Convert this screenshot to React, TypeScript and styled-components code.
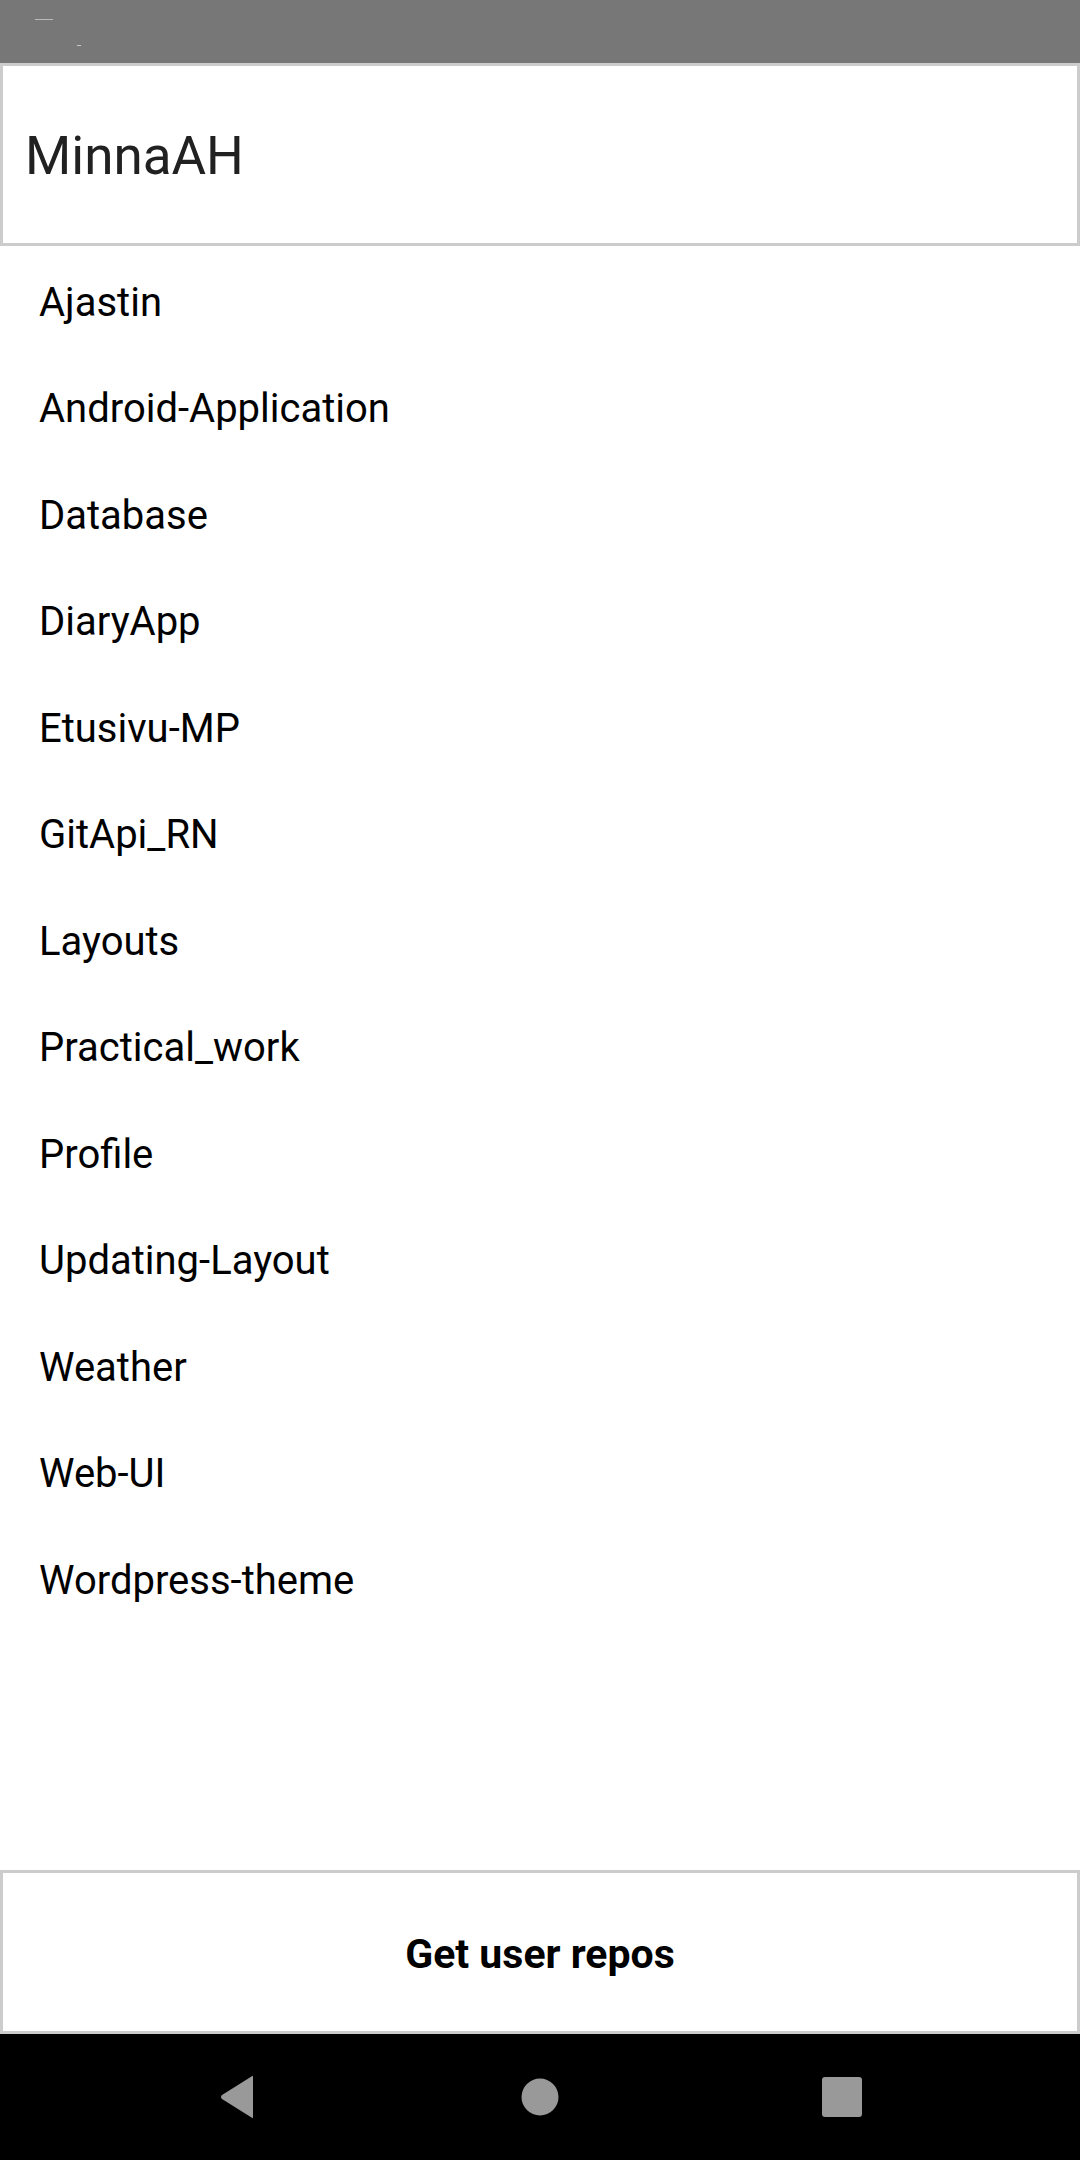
import React from "react";
import styled, { createGlobalStyle } from "styled-components";

const Global = createGlobalStyle`
  html, body { margin: 0; padding: 0; background: #ffffff; }
  body { font-family: Roboto, "Noto Sans", "Liberation Sans", sans-serif; }
  * { box-sizing: border-box; }
`;

const Screen = styled.div`
  width: 1080px;
  height: 2160px;
  display: flex;
  flex-direction: column;
  background: #ffffff;
  overflow: hidden;
`;

const StatusBar = styled.div`
  height: 63px;
  flex: none;
  background: #777777;
  display: flex;
  align-items: flex-start;
  padding: 18px 0 0 35px;
  gap: 24px;
`;

const StatusMark = styled.div<{ $w: number; $top: number; $o: number }>`
  width: ${(p) => p.$w}px;
  height: 1px;
  margin-top: ${(p) => p.$top}px;
  background: rgba(255, 255, 255, ${(p) => p.$o});
`;

const Input = styled.div`
  height: 183px;
  flex: none;
  border: 3px solid #cccccc;
  display: flex;
  align-items: center;
  padding-left: 22px;
  padding-top: 2px;
  font-size: 53px;
  color: #212121;
`;

const List = styled.div`
  flex: 1;
  display: flex;
  flex-direction: column;
  padding-top: 3px;
`;

const Row = styled.div`
  height: 106.5px;
  flex: none;
  display: flex;
  align-items: center;
  padding-left: 39px;
  font-size: 40px;
  color: #000000;
`;

const Button = styled.div`
  height: 164px;
  flex: none;
  border: 3px solid #cccccc;
  display: flex;
  align-items: center;
  justify-content: center;
  padding-top: 4px;
  font-size: 41px;
  font-weight: 700;
  color: #000000;
`;

const NavBar = styled.div`
  height: 126px;
  flex: none;
  background: #000000;
  display: flex;
  align-items: center;
  justify-content: center;
`;

const NavSlot = styled.div`
  width: 302px;
  display: flex;
  justify-content: center;
  align-items: center;
`;

const repos = [
  "Ajastin",
  "Android-Application",
  "Database",
  "DiaryApp",
  "Etusivu-MP",
  "GitApi_RN",
  "Layouts",
  "Practical_work",
  "Profile",
  "Updating-Layout",
  "Weather",
  "Web-UI",
  "Wordpress-theme",
];

export default function App() {
  return (
    <>
      <Global />
      <Screen>
        <StatusBar>
          <StatusMark $w={18} $top={1} $o={0.5} />
          <StatusMark $w={4} $top={27} $o={0.6} />
        </StatusBar>
        <Input>MinnaAH</Input>
        <List>
          {repos.map((r) => (
            <Row key={r}>{r}</Row>
          ))}
        </List>
        <Button>Get user repos</Button>
        <NavBar>
          <NavSlot>
            <svg width="40" height="44" viewBox="0 0 40 44">
              <path d="M35 2 L35 42 Q35 44 33.5 42.5 L4 24 Q2 22 4 20 L33.5 1.5 Q35 0 35 2 Z" fill="#999999" />
            </svg>
          </NavSlot>
          <NavSlot>
            <svg width="38" height="38" viewBox="0 0 38 38">
              <circle cx="19" cy="19" r="18.5" fill="#999999" />
            </svg>
          </NavSlot>
          <NavSlot>
            <svg width="40" height="40" viewBox="0 0 40 40">
              <rect x="0" y="0" width="40" height="40" rx="3" fill="#999999" />
            </svg>
          </NavSlot>
        </NavBar>
      </Screen>
    </>
  );
}
